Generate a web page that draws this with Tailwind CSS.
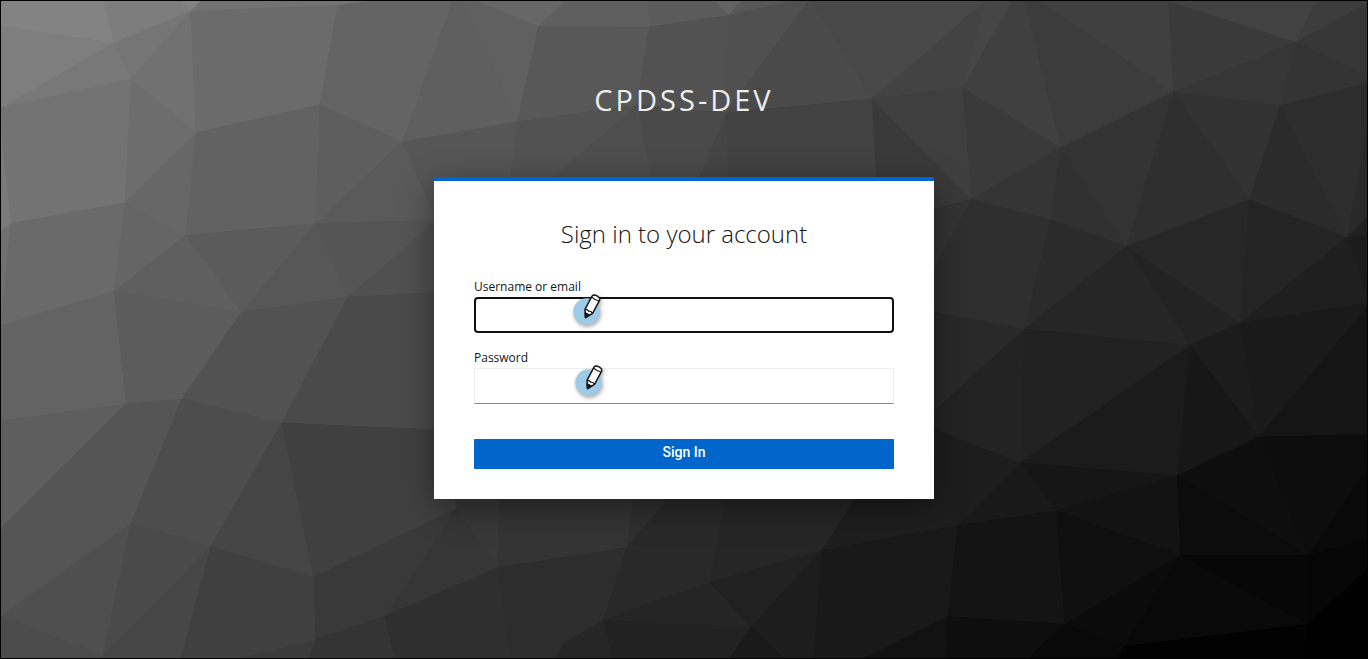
<!DOCTYPE html>
<html lang="en">
<head>
<meta charset="utf-8">
<title>Sign in to CPDSS-DEV</title>
<script src="https://cdn.jsdelivr.net/npm/@tailwindcss/browser@4"></script>
</head>
<body class="relative isolate min-h-screen border border-black bg-[#333333] font-['Open_Sans',sans-serif]">
<!-- Low-poly backdrop, stretched over the whole window. The mesh is drawn twice:
     a crisp pass closes the seams, a smooth pass softens the facet edges. -->
<svg class="absolute inset-0 -z-10 h-full w-full" viewBox="0 0 1368 659" preserveAspectRatio="none" aria-hidden="true">
<defs>
<g id="mesh">
<polygon fill="#838383" points="0,0 103,0 113,42 0,25"/>
<polygon fill="#7d7d7d" points="103,0 179,0 190,10 113,42"/>
<polygon fill="#7e7e7e" points="0,25 113,42 0,107"/>
<polygon fill="#787878" points="0,107 113,42 130,78"/>
<polygon fill="#757575" points="113,42 190,10 130,78"/>
<polygon fill="#717171" points="190,10 130,78 195,132"/>
<polygon fill="#828282" points="179,0 200,0 190,10"/>
<polygon fill="#727272" points="200,0 370,0 337,4 190,10"/>
<polygon fill="#6b6b6b" points="190,10 337,4 319,104 195,132"/>
<polygon fill="#646464" points="337,4 370,0 452,0 402,141 319,104"/>
<polygon fill="#737373" points="0,107 130,78 124,202 10,223 2,155"/>
<polygon fill="#7a7a7a" points="0,107 2,155 10,223 0,231"/>
<polygon fill="#6d6d6d" points="130,78 195,132 124,202"/>
<polygon fill="#676767" points="195,132 185,235 124,202"/>
<polygon fill="#626262" points="195,132 319,104 315,223 185,235"/>
<polygon fill="#5e5e5e" points="319,104 402,141 315,223"/>
<polygon fill="#656565" points="124,202 185,235 113,291"/>
<polygon fill="#6a6a6a" points="10,223 124,202 113,291 0,325 3,285"/>
<polygon fill="#707070" points="0,231 10,223 3,285 0,325"/>
<polygon fill="#5b5b5b" points="185,235 315,223 241,312"/>
<polygon fill="#5f5f5f" points="185,235 241,312 113,291"/>
<polygon fill="#5a5a5a" points="315,223 402,141 436,220"/>
<polygon fill="#555555" points="315,223 436,220 347,297"/>
<polygon fill="#575757" points="315,223 347,297 241,312"/>
<polygon fill="#5c5c5c" points="113,291 241,312 181,399 125,404"/>
<polygon fill="#636363" points="0,325 113,291 125,404 0,421"/>
<polygon fill="#525252" points="241,312 347,297 281,423 181,399"/>
<polygon fill="#505050" points="347,297 436,220 440,292"/>
<polygon fill="#4a4a4a" points="347,297 440,292 440,430 281,423"/>
<polygon fill="#5e5e5e" points="0,421 125,404 0,528"/>
<polygon fill="#555555" points="125,404 181,399 130,524 0,532 0,528"/>
<polygon fill="#4d4d4d" points="181,399 281,423 210,547 130,524"/>
<polygon fill="#545454" points="0,532 130,524 0,617"/>
<polygon fill="#4f4f4f" points="130,524 0,617 102,656"/>
<polygon fill="#4a4a4a" points="130,524 210,547 102,656"/>
<polygon fill="#474747" points="210,547 102,656 100,659 180,659"/>
<polygon fill="#454545" points="210,547 281,423 313,578"/>
<polygon fill="#404040" points="281,423 440,430 456,509 313,578"/>
<polygon fill="#404040" points="210,547 313,578 315,641 240,659 180,659"/>
<polygon fill="#393939" points="313,578 456,509 384,617 315,641"/>
<polygon fill="#3b3b3b" points="315,641 240,659 308,659"/>
<polygon fill="#343434" points="315,641 384,617 395,659 308,659"/>
<polygon fill="#363636" points="384,617 456,509 498,568"/>
<polygon fill="#2f2f2f" points="384,617 498,568 510,659 395,659"/>
<polygon fill="#4c4c4c" points="0,617 102,656 100,659 0,659"/>
<polygon fill="#383838" points="440,430 499,450 498,568 456,509"/>
<polygon fill="#343434" points="499,450 640,450 627,548 498,568"/>
<polygon fill="#2f2f2f" points="640,450 709,450 627,548"/>
<polygon fill="#292929" points="627,548 709,450 733,450 710,583"/>
<polygon fill="#2d2d2d" points="498,568 627,548 603,621 563,645 557,659 510,659"/>
<polygon fill="#292929" points="627,548 603,621 710,583"/>
<polygon fill="#252525" points="603,621 710,583 751,628"/>
<polygon fill="#222222" points="603,621 751,628 730,659 612,659"/>
<polygon fill="#262626" points="603,621 612,659 557,659 563,645"/>
<polygon fill="#262626" points="710,583 733,450 887,450 822,551"/>
<polygon fill="#212121" points="710,583 822,551 751,628"/>
<polygon fill="#1d1d1d" points="751,628 822,551 814,659 784,659"/>
<polygon fill="#1a1a1a" points="751,628 784,659 730,659"/>
<polygon fill="#1e1e1e" points="822,551 887,450 934,450 958,526"/>
<polygon fill="#191919" points="822,551 958,526 948,617 864,659 814,659"/>
<polygon fill="#121212" points="948,617 947,659 864,659"/>
<polygon fill="#5f5f5f" points="452,0 463,0 517,121 402,141"/>
<polygon fill="#606060" points="463,0 476,0 538,25 517,121"/>
<polygon fill="#676767" points="476,0 565,0 538,25"/>
<polygon fill="#5f5f5f" points="565,0 648,0 649,26 538,25"/>
<polygon fill="#5b5b5b" points="648,0 715,0 729,14 649,26"/>
<polygon fill="#626262" points="715,0 741,0 729,14"/>
<polygon fill="#585858" points="741,0 790,0 729,14"/>
<polygon fill="#585858" points="538,25 649,26 637,104 517,121"/>
<polygon fill="#525252" points="649,26 729,14 726,112 637,104"/>
<polygon fill="#505050" points="729,14 790,0 808,0 726,112"/>
<polygon fill="#4a4a4a" points="808,0 813,0 872,98 726,112"/>
<polygon fill="#565656" points="402,141 517,121 509,190 436,220"/>
<polygon fill="#525252" points="517,121 637,104 538,190 509,190"/>
<polygon fill="#4e4e4e" points="637,104 538,190 654,190"/>
<polygon fill="#4a4a4a" points="637,104 726,112 694,190 654,190"/>
<polygon fill="#454545" points="726,112 694,190 729,190"/>
<polygon fill="#424242" points="726,112 729,190 879,190 872,98"/>
<polygon fill="#3a3a3a" points="872,98 879,220 972,199"/>
<polygon fill="#3f3f3f" points="872,98 963,87 972,199"/>
<polygon fill="#484848" points="813,0 986,0 872,98"/>
<polygon fill="#434343" points="872,98 986,0 963,87"/>
<polygon fill="#464646" points="963,87 986,0 1012,0"/>
<polygon fill="#404040" points="963,87 1012,0 1025,0 1061,147"/>
<polygon fill="#3c3c3c" points="1061,147 1025,0 1040,0 1174,91"/>
<polygon fill="#404040" points="1040,0 1169,0 1174,91"/>
<polygon fill="#3a3a3a" points="1169,0 1297,41 1174,91"/>
<polygon fill="#424242" points="1169,0 1317,0 1297,41"/>
<polygon fill="#3d3d3d" points="1317,0 1368,0 1368,2 1297,41"/>
<polygon fill="#373737" points="1368,2 1297,41 1368,75"/>
<polygon fill="#343434" points="1297,41 1368,75 1368,82 1281,105"/>
<polygon fill="#363636" points="1174,91 1297,41 1281,105"/>
<polygon fill="#323232" points="1174,91 1281,105 1250,199"/>
<polygon fill="#2f2f2f" points="1174,91 1250,199 1127,246"/>
<polygon fill="#333333" points="1061,147 1174,91 1127,246"/>
<polygon fill="#313131" points="1061,147 1127,246 1051,219"/>
<polygon fill="#3a3a3a" points="963,87 1061,147 972,199"/>
<polygon fill="#353535" points="972,199 1061,147 1051,219"/>
<polygon fill="#3a3a3a" points="879,220 972,199 920,212"/>
<polygon fill="#333333" points="972,199 920,212 920,296"/>
<polygon fill="#2f2f2f" points="972,199 1051,219 1025,329 920,309 920,296"/>
<polygon fill="#2b2b2b" points="1051,219 1127,246 1025,329"/>
<polygon fill="#262626" points="1127,246 1025,329 1191,345"/>
<polygon fill="#232323" points="1127,246 1191,345 1241,323"/>
<polygon fill="#272727" points="1127,246 1250,199 1241,323"/>
<polygon fill="#242424" points="1250,199 1241,323 1348,237"/>
<polygon fill="#2b2b2b" points="1281,105 1250,199 1348,237"/>
<polygon fill="#2d2d2d" points="1281,105 1348,237 1368,130 1368,82"/>
<polygon fill="#292929" points="1348,237 1368,130 1368,217"/>
<polygon fill="#212121" points="1348,237 1368,217 1368,235"/>
<polygon fill="#1c1c1c" points="1348,237 1368,235 1368,294"/>
<polygon fill="#1f1f1f" points="1348,237 1368,294 1368,303 1241,323"/>
<polygon fill="#1a1a1a" points="1241,323 1368,303 1368,307 1260,437"/>
<polygon fill="#1c1c1c" points="1241,323 1191,345 1260,437"/>
<polygon fill="#151515" points="1260,437 1368,307 1368,435"/>
<polygon fill="#171717" points="1191,345 1260,437 1178,476"/>
<polygon fill="#1b1b1b" points="1191,345 1178,476 1021,463"/>
<polygon fill="#212121" points="1025,329 1191,345 1021,463"/>
<polygon fill="#232323" points="1025,329 1021,463 920,424"/>
<polygon fill="#292929" points="920,309 1025,329 920,424"/>
<polygon fill="#1d1d1d" points="1021,463 920,424 934,450 958,526"/>
<polygon fill="#191919" points="1021,463 958,526 1057,511"/>
<polygon fill="#161616" points="1021,463 1178,476 1057,511"/>
<polygon fill="#131313" points="1178,476 1057,511 1181,556"/>
<polygon fill="#0e0e0e" points="1178,476 1260,437 1309,556"/>
<polygon fill="#0c0c0c" points="1178,476 1309,556 1181,556"/>
<polygon fill="#0d0d0d" points="1260,437 1368,435 1368,470 1309,556"/>
<polygon fill="#090909" points="1309,556 1368,470 1368,541"/>
<polygon fill="#060606" points="1309,556 1368,541 1368,570 1309,625"/>
<polygon fill="#010101" points="1309,625 1368,570 1368,659 1305,659"/>
<polygon fill="#070707" points="1181,556 1309,556 1309,625"/>
<polygon fill="#090909" points="1181,556 1309,625 1125,647"/>
<polygon fill="#0b0b0b" points="1181,556 1065,625 1125,647"/>
<polygon fill="#0f0f0f" points="1057,511 1181,556 1065,625"/>
<polygon fill="#141414" points="958,526 1057,511 1065,625 948,617"/>
<polygon fill="#0e0e0e" points="948,617 1065,625 1030,659 947,659"/>
<polygon fill="#090909" points="1065,625 1030,659 1118,659 1125,647"/>
<polygon fill="#020202" points="1125,647 1309,625 1305,659 1118,659"/>
</g>
</defs>
<rect width="1368" height="659" fill="#3a3a3a"/>
<use href="#mesh" shape-rendering="crispEdges"/>
<use href="#mesh"/>
</svg>

<!-- Field marker: pencil over a soft blue disc -->
<svg class="hidden" aria-hidden="true">
<symbol id="pencil" viewBox="0 0 40 40" overflow="visible">
<circle cx="16.500" cy="22.500" r="13.200" fill="#9dcae6"/>
<g transform="translate(15.500 28.500) rotate(28)" stroke="#161616" stroke-width="1.500" stroke-linejoin="round">
<path d="M0 0 L-4.300 -7 V-22 Q-4 -24.500 0 -24.500 Q4 -24.500 4.300 -22 V-7 Z" fill="#ffffff"/>
<path d="M0 0 L-2.400 -4 H2.400 Z" fill="#161616"/>
<path d="M-4.300 -7 Q-2 -8.500 0 -7 Q2 -8.500 4.300 -7 M-4.300 -21 Q0 -19.500 4.300 -21" fill="none" stroke-width="1.200"/>
</g>
</symbol>
</svg>

<div class="flex flex-col items-center">
<header class="pt-[78px] pb-[57px]">
<h1 class="text-center text-[29px] leading-[41px] tracking-[3px] text-[#ededed] uppercase">CPDSS-DEV</h1>
</header>
<main class="w-full max-w-[500px] border-t-4 border-[#0066cc] bg-white px-10 pt-[35px] pb-[30px] shadow-[0_8px_32px_rgb(0_0_0/0.4)]">
<h2 class="text-center text-2xl leading-9 font-light text-[#151515]">Sign in to your account</h2>
<form class="mt-[25px] flex flex-col">
<label for="username" class="text-xs leading-5 text-[#151515]">Username or email</label>
<div class="relative">
<input id="username" type="text" class="block h-9 w-full rounded border-2 border-[#101010] bg-white px-2 text-base outline-none">
<svg class="pointer-events-none absolute -top-2 left-24 size-10 overflow-visible drop-shadow-[1px_2px_2px_rgb(0_0_0/0.35)]" aria-hidden="true"><use href="#pencil"/></svg>
</div>
<label for="password" class="mt-[15px] text-xs leading-5 text-[#151515]">Password</label>
<div class="relative">
<input id="password" type="password" class="block h-9 w-full border border-[#ededed] border-b-[#8a8d90] bg-white px-2 text-base outline-none">
<svg class="pointer-events-none absolute -top-2 left-[98px] size-10 overflow-visible drop-shadow-[1px_2px_2px_rgb(0_0_0/0.35)]" aria-hidden="true"><use href="#pencil"/></svg>
</div>
<button type="submit" class="mt-[35px] h-[30px] w-full rounded-[1px] bg-[#0066cc] pb-1 font-[Roboto,sans-serif] text-sm leading-5 font-medium text-white">Sign In</button>
</form>
</main>
</div>
</body>
</html>
